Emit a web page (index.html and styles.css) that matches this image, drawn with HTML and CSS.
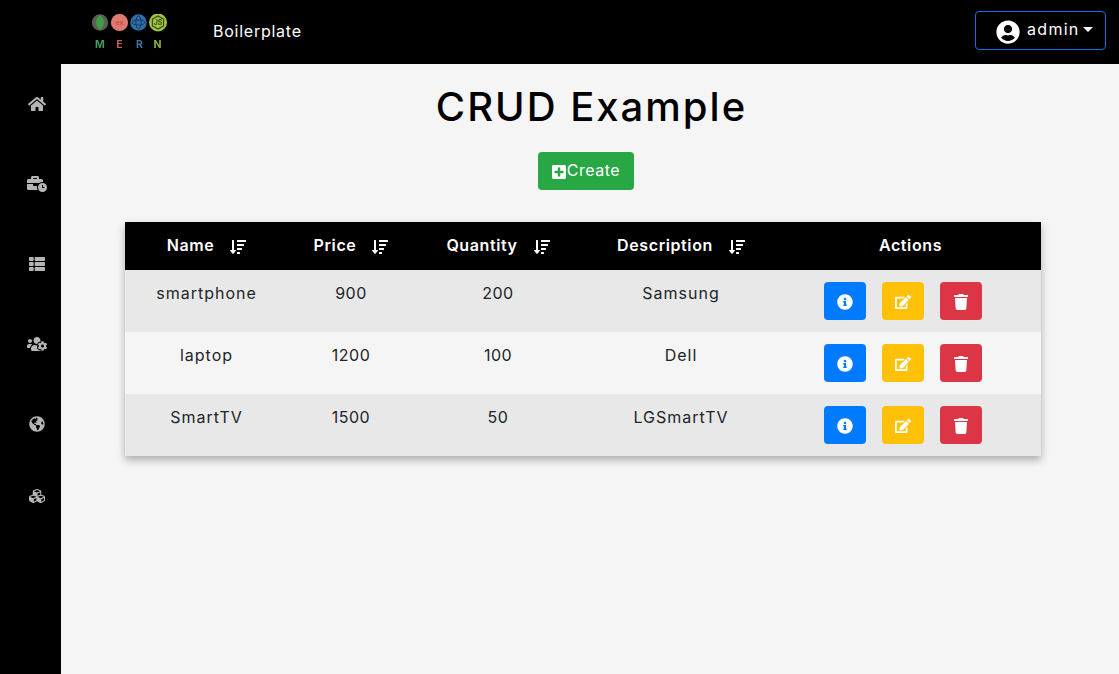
FILE: index.html
```html
<!DOCTYPE html>
<html lang="en">
<head>
<meta charset="utf-8">
<title>CRUD Example</title>
<link rel="stylesheet" href="styles.css">
</head>
<body>
<svg class="defs" aria-hidden="true">
  <symbol id="i-home" viewBox="0 0 576 512"><path d="M280.37 148.26L96 300.11V464a16 16 0 0 0 16 16l112.06-.29a16 16 0 0 0 15.92-16V368a16 16 0 0 1 16-16h64a16 16 0 0 1 16 16v95.64a16 16 0 0 0 16 16.05L464 480a16 16 0 0 0 16-16V300L295.67 148.26a12.19 12.19 0 0 0-15.3 0zM571.6 251.47L488 182.56V44.05a12 12 0 0 0-12-12h-56a12 12 0 0 0-12 12v72.61L318.47 43a48 48 0 0 0-61 0L4.34 251.47a12 12 0 0 0-1.6 16.9l25.5 31A12 12 0 0 0 45.15 301l235.22-193.74a12.19 12.19 0 0 1 15.3 0L530.9 301a12 12 0 0 0 16.9-1.6l25.5-31a12 12 0 0 0-1.7-16.93z"/></symbol>
  <symbol id="i-biz" viewBox="0 0 640 512"><path d="M496 224c-79.59 0-144 64.41-144 144s64.41 144 144 144 144-64.41 144-144-64.41-144-144-144zm64 150.29c0 5.34-4.37 9.71-9.71 9.71h-60.57c-5.34 0-9.71-4.37-9.71-9.71v-76.57c0-5.34 4.37-9.71 9.71-9.71h12.57c5.34 0 9.71 4.37 9.71 9.71V352h38.29c5.34 0 9.71 4.37 9.71 9.71v12.58zM496 192c5.4 0 10.72.33 16 .81V144c0-25.6-22.4-48-48-48h-80V48c0-25.6-22.4-48-48-48H176c-25.6 0-48 22.4-48 48v48H48c-25.6 0-48 22.4-48 48v80h395.12c28.6-20.09 63.35-32 100.88-32zM320 96H192V64h128v32zm6.82 224H208c-8.84 0-16-7.16-16-16v-48H0v144c0 25.6 22.4 48 48 48h291.43C327.1 423.96 320 396.82 320 368c0-16.66 2.48-32.72 6.82-48z"/></symbol>
  <symbol id="i-list" viewBox="0 0 512 512"><path d="M149.333 216v80c0 13.255-10.745 24-24 24H24c-13.255 0-24-10.745-24-24v-80c0-13.255 10.745-24 24-24h101.333c13.255 0 24 10.745 24 24zM0 376v80c0 13.255 10.745 24 24 24h101.333c13.255 0 24-10.745 24-24v-80c0-13.255-10.745-24-24-24H24c-13.255 0-24 10.745-24 24zM125.333 32H24C10.745 32 0 42.745 0 56v80c0 13.255 10.745 24 24 24h101.333c13.255 0 24-10.745 24-24V56c0-13.255-10.745-24-24-24zm80 448H488c13.255 0 24-10.745 24-24v-80c0-13.255-10.745-24-24-24H205.333c-13.255 0-24 10.745-24 24v80c0 13.255 10.745 24 24 24zm-24-424v80c0 13.255 10.745 24 24 24H488c13.255 0 24-10.745 24-24V56c0-13.255-10.745-24-24-24H205.333c-13.255 0-24 10.745-24 24zm24 264H488c13.255 0 24-10.745 24-24v-80c0-13.255-10.745-24-24-24H205.333c-13.255 0-24 10.745-24 24v80c0 13.255 10.745 24 24 24z"/></symbol>
  <symbol id="i-users" viewBox="0 0 640 512"><path d="M610.5 341.3c2.6-14.1 2.6-28.5 0-42.6l25.8-14.9c3-1.7 4.3-5.2 3.3-8.5-6.7-21.5-18.2-41-33.2-57.4-2.3-2.5-6-3.1-9-1.4l-25.8 14.9c-10.9-9.3-23.4-16.5-36.9-21.3v-29.8c0-3.4-2.4-6.4-5.7-7.1-22.3-5-45-4.8-66.2 0-3.3.7-5.7 3.7-5.7 7.1v29.8c-13.5 4.8-26 12-36.9 21.3l-25.8-14.9c-2.9-1.7-6.7-1.1-9 1.4-15 16.4-26.5 35.9-33.2 57.4-1 3.3.4 6.8 3.3 8.5l25.8 14.9c-2.6 14.1-2.6 28.5 0 42.6l-25.8 14.9c-3 1.7-4.3 5.2-3.3 8.5 6.7 21.5 18.2 41 33.2 57.4 2.3 2.5 6 3.1 9 1.4l25.8-14.9c10.9 9.3 23.4 16.5 36.9 21.3v29.8c0 3.4 2.4 6.4 5.7 7.1 22.3 5 45 4.8 66.2 0 3.3-.7 5.7-3.7 5.7-7.1v-29.8c13.5-4.8 26-12 36.9-21.3l25.8 14.9c2.9 1.7 6.7 1.1 9-1.4 15-16.4 26.5-35.9 33.2-57.4 1-3.3-.4-6.8-3.3-8.5l-25.8-14.9zM496 368.5c-26.8 0-48.5-21.8-48.5-48.5s21.8-48.5 48.5-48.5 48.5 21.8 48.5 48.5-21.7 48.5-48.5 48.5zM96 224c35.3 0 64-28.7 64-64s-28.7-64-64-64-64 28.7-64 64 28.7 64 64 64zm224 32c1.9 0 3.7-.5 5.6-.6 8.3-21.7 20.5-42.1 36.3-59.2 7.4-8 17.9-12.6 28.9-12.6 6.9 0 13.7 1.8 19.6 5.3l7.9 4.6c.8-.5 1.6-.9 2.4-1.4 7-14.6 11.2-30.8 11.2-48 0-61.9-50.1-112-112-112S208 82.1 208 144c0 61.9 50.1 112 112 112zm105.2 194.5c-2.3-1.2-4.6-2.6-6.8-3.9-8.2 4.8-15.3 9.8-27.5 9.8-10.9 0-21.4-4.6-28.9-12.6-18.3-19.8-32.3-43.9-40.2-69.6-10.7-34.5 24.9-49.7 25.8-50.3-.1-2.6-.1-5.2 0-7.8l-7.9-4.6c-3.8-2.2-7-5-9.8-8.1-3.3.2-6.5.6-9.8.6-24.6 0-47.6-6-68.5-16h-8.3C179.6 288 128 339.6 128 403.2V432c0 26.5 21.5 48 48 48h255.4c-3.7-6-6.2-12.8-6.2-20.3v-9.2zM173.1 274.6C161.5 263.1 145.6 256 128 256H64c-35.3 0-64 28.7-64 64v32c0 17.7 14.3 32 32 32h65.9c6.3-47.4 34.9-87.3 75.2-109.4z"/></symbol>
  <symbol id="i-globe" viewBox="0 0 496 512"><path d="M248 8C111.03 8 0 119.03 0 256s111.03 248 248 248 248-111.03 248-248S384.97 8 248 8zm82.29 357.6c-3.9 3.88-7.99 7.95-11.31 11.28-2.99 3-5.1 6.7-6.17 10.71-1.51 5.66-2.73 11.38-4.77 16.87l-17.39 46.85c-13.76 3-28 4.69-42.65 4.69v-27.38c1.69-12.62-7.64-36.26-22.63-51.25-6-6-9.37-14.14-9.37-22.63v-32.01c0-11.64-6.27-22.34-16.46-27.97-14.37-7.95-34.81-19.06-48.81-26.11-11.48-5.78-22.1-13.14-31.65-21.75l-.8-.72a114.792 114.792 0 0 1-18.06-20.74c-9.38-13.77-24.66-36.42-34.59-51.14 20.47-45.5 57.36-82.04 103.2-101.89l24.01 12.01C203.48 89.74 216 82.01 216 70.11v-11.3c7.99-1.29 16.12-2.11 24.39-2.42l28.3 28.3c6.25 6.25 6.25 16.38 0 22.63L264 112l-10.34 10.34c-3.12 3.12-3.12 8.19 0 11.31l4.69 4.69c3.12 3.12 3.12 8.19 0 11.31l-8 8a8.008 8.008 0 0 1-5.66 2.34h-8.99c-2.08 0-4.08.81-5.58 2.27l-9.92 9.65a8.008 8.008 0 0 0-1.58 9.31l15.59 31.19c2.66 5.32-1.21 11.58-7.15 11.58h-5.64c-1.93 0-3.79-.7-5.24-1.96l-9.28-8.06a16.017 16.017 0 0 0-15.55-3.1l-31.17 10.39a11.95 11.95 0 0 0-8.17 11.34c0 4.53 2.56 8.66 6.61 10.69l11.08 5.54c9.41 4.71 19.79 7.16 30.31 7.16s22.59 27.29 32 32h66.75c8.49 0 16.62 3.37 22.63 9.37l13.69 13.69a30.503 30.503 0 0 1 8.93 21.57 46.536 46.536 0 0 1-13.72 32.98zM417 274.25c-5.79-1.45-10.84-5-14.15-9.97l-17.98-26.97a23.97 23.97 0 0 1 0-26.62l19.59-29.38c2.32-3.47 5.5-6.29 9.24-8.15l12.98-6.49C440.2 193.59 448 223.87 448 256c0 8.67-.74 17.16-1.82 25.54L417 274.25z"/></symbol>
  <symbol id="i-cubes" viewBox="0 0 512 512"><path d="M488.6 250.2L392 214V105.5c0-15-9.3-28.4-23.4-33.7l-100-37.5c-8.1-3.1-17.1-3.1-25.3 0l-100 37.5c-14.1 5.3-23.4 18.7-23.4 33.7V214l-96.6 36.2C9.3 255.5 0 268.9 0 283.9V394c0 13.6 7.7 26.1 19.9 32.2l100 50c10.1 5.1 22.1 5.1 32.2 0l103.9-52 103.9 52c10.1 5.1 22.1 5.1 32.2 0l100-50c12.2-6.1 19.9-18.6 19.9-32.2V283.9c0-15-9.3-28.4-23.4-33.7zM358 214.8l-85 31.9v-68.2l85-37v73.3zM154 104.1l102-38.2 102 38.2v.6l-102 41.4-102-41.4v-.6zm84 291.1l-85 42.5v-79.1l85-38.8v75.4zm0-112l-102 41.4-102-41.4v-.6l102-38.2 102 38.2v.6zm240 112l-85 42.5v-79.1l85-38.8v75.4zm0-112l-102 41.4-102-41.4v-.6l102-38.2 102 38.2v.6z"/></symbol>
  <symbol id="i-user" viewBox="0 0 496 512"><path d="M248 8C111 8 0 119 0 256s111 248 248 248 248-111 248-248S385 8 248 8zm0 96c48.6 0 88 39.4 88 88s-39.4 88-88 88-88-39.4-88-88 39.4-88 88-88zm0 344c-58.7 0-111.3-26.6-146.5-68.2 18.8-35.4 55.6-59.8 98.5-59.8 2.4 0 4.8.4 7.1 1.1 13 4.2 26.6 6.9 40.9 6.9 14.3 0 28-2.7 40.9-6.9 2.3-.7 4.7-1.1 7.1-1.1 42.9 0 79.7 24.4 98.5 59.8C359.3 421.4 306.7 448 248 448z"/></symbol>
  <symbol id="i-plus" viewBox="0 0 448 512"><path d="M400 32H48C21.5 32 0 53.5 0 80v352c0 26.5 21.5 48 48 48h352c26.5 0 48-21.5 48-48V80c0-26.5-21.5-48-48-48zm-32 252c0 6.6-5.4 12-12 12h-92v92c0 6.6-5.4 12-12 12h-56c-6.6 0-12-5.4-12-12v-92H92c-6.6 0-12-5.4-12-12v-56c0-6.6 5.4-12 12-12h92v-92c0-6.6 5.4-12 12-12h56c6.6 0 12 5.4 12 12v92h92c6.6 0 12 5.4 12 12v56z"/></symbol>
  <symbol id="i-sort" viewBox="0 0 512 512"><path d="M304 416h-64a16 16 0 0 0-16 16v32a16 16 0 0 0 16 16h64a16 16 0 0 0 16-16v-32a16 16 0 0 0-16-16zm-128-64h-48V48a16 16 0 0 0-16-16H80a16 16 0 0 0-16 16v304H16c-14.19 0-21.37 17.24-11.29 27.31l80 96a16 16 0 0 0 22.62 0l80-96C197.35 369.26 190.22 352 176 352zm256-192H240a16 16 0 0 0-16 16v32a16 16 0 0 0 16 16h192a16 16 0 0 0 16-16v-32a16 16 0 0 0-16-16zm-64 128H240a16 16 0 0 0-16 16v32a16 16 0 0 0 16 16h128a16 16 0 0 0 16-16v-32a16 16 0 0 0-16-16zM496 32H240a16 16 0 0 0-16 16v32a16 16 0 0 0 16 16h256a16 16 0 0 0 16-16V48a16 16 0 0 0-16-16z"/></symbol>
  <symbol id="i-info" viewBox="0 0 512 512"><path d="M256 8C119.043 8 8 119.083 8 256c0 136.997 111.043 248 248 248s248-111.003 248-248C504 119.083 392.957 8 256 8zm0 110c23.196 0 42 18.804 42 42s-18.804 42-42 42-42-18.804-42-42 18.804-42 42-42zm56 254c0 6.627-5.373 12-12 12h-88c-6.627 0-12-5.373-12-12v-24c0-6.627 5.373-12 12-12h12v-64h-12c-6.627 0-12-5.373-12-12v-24c0-6.627 5.373-12 12-12h64c6.627 0 12 5.373 12 12v100h12c6.627 0 12 5.373 12 12v24z"/></symbol>
  <symbol id="i-edit" viewBox="0 0 576 512"><path d="M402.6 83.2l90.2 90.2c3.8 3.8 3.8 10 0 13.8L274.4 405.6l-92.8 10.3c-12.4 1.4-22.9-9.1-21.5-21.5l10.3-92.8L388.8 83.2c3.8-3.8 10-3.8 13.8 0zm162-22.9l-48.8-48.8c-15.2-15.2-39.9-15.2-55.2 0l-35.4 35.4c-3.8 3.8-3.8 10 0 13.8l90.2 90.2c3.8 3.8 10 3.8 13.8 0l35.4-35.4c15.2-15.3 15.2-40 0-55.2zM384 346.2V448H64V128h229.8c3.2 0 6.2-1.3 8.5-3.5l40-40c7.6-7.6 2.2-20.5-8.5-20.5H48C21.5 64 0 85.5 0 112v352c0 26.5 21.5 48 48 48h352c26.5 0 48-21.5 48-48V306.2c0-10.7-12.9-16-20.5-8.5l-40 40c-2.2 2.3-3.5 5.3-3.5 8.5z"/></symbol>
  <symbol id="i-trash" viewBox="0 0 448 512"><path d="M432 32H312l-9.4-18.7A24 24 0 0 0 281.1 0H166.8a23.72 23.72 0 0 0-21.4 13.3L136 32H16A16 16 0 0 0 0 48v32a16 16 0 0 0 16 16h416a16 16 0 0 0 16-16V48a16 16 0 0 0-16-16zM53.2 467a48 48 0 0 0 47.9 45h245.8a48 48 0 0 0 47.9-45L416 128H32z"/></symbol>
</svg>

<header class="navbar">
  <a class="logo" href="#">
    <svg class="logo-art" viewBox="0 0 76 36" aria-label="MERN logo">
      <circle cx="9" cy="8.500" r="8.200" fill="#5d5d55"/>
      <path d="M9 .8c3 2.800 4.300 5.600 4.100 8.300-.2 3-2.500 5-4.100 7.400-1.600-2.400-3.900-4.400-4.100-7.400C4.700 6.400 6 3.600 9 .8z" fill="#3f9c45"/>
      <circle cx="28.500" cy="8.500" r="8.600" fill="#e0786e"/>
      <text class="logo-mark" x="28.500" y="11" fill="#b9554e">ex</text>
      <circle cx="47.500" cy="8.500" r="8.200" fill="#2f6fa8"/>
      <ellipse cx="47.500" cy="8.500" rx="6.500" ry="2.600" fill="none" stroke="#173a63"/>
      <ellipse cx="47.500" cy="8.500" rx="2.600" ry="6.500" fill="none" stroke="#173a63"/>
      <circle cx="67" cy="8.500" r="9" fill="#a3c63f"/>
      <path d="M67 2l5.600 3.200v6.600L67 15l-5.600-3.200V5.200z" fill="none" stroke="#3b4d1a" stroke-width="1.200"/>
      <text class="logo-mark" x="67" y="11" fill="#3b4d1a">JS</text>
      <g class="logo-text">
        <text x="9" y="34" fill="#3f9c5a">M</text>
        <text x="28.500" y="34" fill="#b9605a">E</text>
        <text x="48.500" y="34" fill="#3f76a6">R</text>
        <text x="66.500" y="34" fill="#8fb23c">N</text>
      </g>
    </svg>
  </a>
  <a class="brand" href="#">Boilerplate</a>
  <button class="user-btn" type="button">
    <svg class="user-icon"><use href="#i-user"/></svg>
    <span class="user-name">admin</span>
    <span class="caret"></span>
  </button>
</header>

<div class="shell">
  <nav class="sidebar">
    <a class="side-item" href="#"><svg class="side-icon"><use href="#i-home"/></svg></a>
    <a class="side-item" href="#"><svg class="side-icon"><use href="#i-biz"/></svg></a>
    <a class="side-item" href="#"><svg class="side-icon"><use href="#i-list"/></svg></a>
    <a class="side-item" href="#"><svg class="side-icon"><use href="#i-users"/></svg></a>
    <a class="side-item" href="#"><svg class="side-icon"><use href="#i-globe"/></svg></a>
    <a class="side-item side-item-last" href="#"><svg class="side-icon"><use href="#i-cubes"/></svg></a>
  </nav>

  <main class="content">
    <h1 class="title">CRUD Example</h1>
    <div class="create-row">
      <button class="create-btn" type="button"><svg class="create-icon"><use href="#i-plus"/></svg>Create</button>
    </div>
    <div class="table-wrap">
      <table class="data-table">
        <colgroup>
          <col class="c-name"><col class="c-price"><col class="c-qty"><col class="c-desc"><col class="c-act">
        </colgroup>
        <thead>
          <tr>
            <th><span class="th-in">Name<svg class="sort"><use href="#i-sort"/></svg></span></th>
            <th><span class="th-in">Price<svg class="sort"><use href="#i-sort"/></svg></span></th>
            <th><span class="th-in">Quantity<svg class="sort"><use href="#i-sort"/></svg></span></th>
            <th><span class="th-in">Description<svg class="sort"><use href="#i-sort"/></svg></span></th>
            <th><span class="th-in">Actions</span></th>
          </tr>
        </thead>
        <tbody>
          <tr>
            <td>smartphone</td><td class="num">900</td><td class="num">200</td><td>Samsung</td>
            <td><div class="actions">
              <button class="act act-info" type="button"><svg class="act-icon"><use href="#i-info"/></svg></button>
              <button class="act act-edit" type="button"><svg class="act-icon"><use href="#i-edit"/></svg></button>
              <button class="act act-del" type="button"><svg class="act-icon"><use href="#i-trash"/></svg></button>
            </div></td>
          </tr>
          <tr>
            <td>laptop</td><td class="num">1200</td><td class="num">100</td><td>Dell</td>
            <td><div class="actions">
              <button class="act act-info" type="button"><svg class="act-icon"><use href="#i-info"/></svg></button>
              <button class="act act-edit" type="button"><svg class="act-icon"><use href="#i-edit"/></svg></button>
              <button class="act act-del" type="button"><svg class="act-icon"><use href="#i-trash"/></svg></button>
            </div></td>
          </tr>
          <tr>
            <td>SmartTV</td><td class="num">1500</td><td class="num">50</td><td>LGSmartTV</td>
            <td><div class="actions">
              <button class="act act-info" type="button"><svg class="act-icon"><use href="#i-info"/></svg></button>
              <button class="act act-edit" type="button"><svg class="act-icon"><use href="#i-edit"/></svg></button>
              <button class="act act-del" type="button"><svg class="act-icon"><use href="#i-trash"/></svg></button>
            </div></td>
          </tr>
        </tbody>
      </table>
    </div>
  </main>
</div>
</body>
</html>
```

FILE: styles.css
```css
* { box-sizing: border-box; }

html, body { height: 100%; }

body {
  margin: 0;
  display: flex;
  flex-direction: column;
  overflow: hidden;
  background: #f5f5f5;
  color: #212529;
  font-family: Inter, "Open Sans", "Liberation Sans", sans-serif;
  font-size: 16px;
  line-height: 24px;
  letter-spacing: .35px;
}

.defs { display: none; }

a { color: inherit; text-decoration: none; }

.navbar {
  height: 64px;
  flex: none;
  display: flex;
  align-items: center;
  background: #000;
  color: #fff;
  padding: 0 13px 0 91px;
}

.logo { display: flex; width: 76px; height: 36px; margin-top: -1px; }
.logo-art { width: 76px; height: 36px; filter: blur(.4px); }
.logo-text text { font-size: 10.500px; font-weight: 700; text-anchor: middle; letter-spacing: 0; }
.logo-mark { font-size: 7px; font-weight: 700; text-anchor: middle; letter-spacing: 0; }

.brand { margin-left: 46px; margin-top: -3px; letter-spacing: .75px; }

.user-btn {
  margin-left: auto;
  margin-top: -3px;
  width: 131px;
  height: 39px;
  display: flex;
  align-items: center;
  padding: 0 12px 0 20px;
  background: #000;
  color: #fff;
  border: 1px solid #0f6fe6;
  border-radius: 4px;
  font: inherit;
  letter-spacing: 1.300px;
}

.user-name { margin-top: -3px; }

.user-icon { width: 24px; height: 24px; fill: #fff; margin-right: 7px; margin-top: 3px; }

.caret {
  margin-left: 3px;
  border-top: 5px solid #fff;
  border-left: 5px solid transparent;
  border-right: 5px solid transparent;
  margin-top: -3px;
}

.shell { flex: 1; display: flex; min-height: 0; }

.sidebar {
  width: 61px;
  flex: none;
  display: flex;
  flex-direction: column;
  background: #000;
}

.side-item {
  height: 80px;
  display: flex;
  align-items: center;
  justify-content: center;
  padding-left: 13px;
}

.side-item-last { height: 64px; }

.side-icon { width: 20px; height: 16px; fill: #b5b5b5; }

.content { flex: 1; min-width: 0; }

.title {
  margin: 19px 0 0;
  height: 48px;
  padding-left: 3px;
  text-align: center;
  font-size: 40px;
  line-height: 48px;
  font-weight: 500;
  color: #000;
  letter-spacing: 2px;
}

.create-row {
  margin-top: 21px;
  display: flex;
  justify-content: center;
  padding-right: 8px;
}

.create-btn {
  width: 96px;
  height: 38px;
  display: flex;
  align-items: center;
  justify-content: center;
  padding: 0 0 2px;
  background: #28a745;
  color: #fff;
  border: 0;
  border-radius: 4px;
  font: inherit;
  letter-spacing: .5px;
}

.create-icon { width: 14px; height: 16px; fill: #fff; margin-top: 4px; margin-right: 1px; }

.table-wrap {
  margin: 32px 78px 0 64px;
  box-shadow: 0 4px 8px rgba(0, 0, 0, .3);
}

.data-table {
  width: 100%;
  table-layout: fixed;
  border-collapse: collapse;
}

.c-name { width: 163px; }
.c-price { width: 126px; }
.c-qty { width: 168px; }
.c-desc { width: 198px; }
.c-act { width: 261px; }

.data-table th {
  height: 48px;
  padding: 0 0 2px;
  background: #000;
  color: #fff;
  font-weight: 600;
  text-align: center;
  vertical-align: middle;
  letter-spacing: .6px;
}

.th-in { display: inline-flex; align-items: flex-start; height: 24px; line-height: 22px; }

.sort { width: 16px; height: 16px; fill: #fff; margin-left: 16px; margin-top: 5px; }

.data-table td {
  height: 62px;
  padding: 11px 0 12px;
  text-align: center;
  vertical-align: top;
  letter-spacing: 1px;
}

.data-table td.num { letter-spacing: .5px; }

.data-table tbody tr:nth-child(odd) { background: #e8e8e8; }
.data-table tbody tr:nth-child(even) { background: #f5f5f5; }

.actions { display: flex; gap: 16px; padding-left: 44px; margin-top: 1px; }

.act {
  width: 42px;
  height: 38px;
  display: flex;
  align-items: center;
  justify-content: center;
  padding: 0;
  border: 0;
  border-radius: 4px;
  color: #fff;
}

.act-icon { width: 16px; height: 16px; fill: #fff; margin-top: 1px; }

.act-info { background: #007bff; }
.act-edit { background: #ffc107; }
.act-del { background: #dc3545; }
```
